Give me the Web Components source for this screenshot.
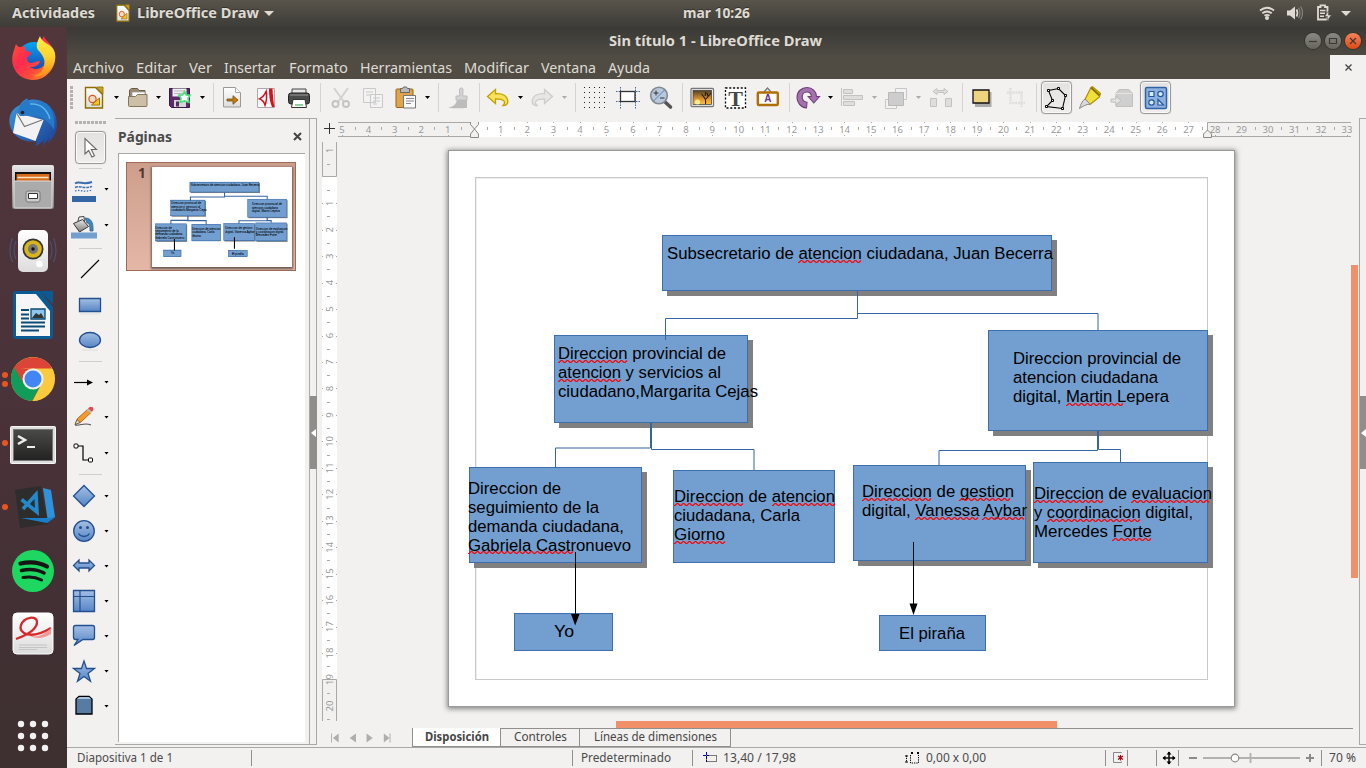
<!DOCTYPE html>
<html lang="es">
<head>
<meta charset="utf-8">
<title>Sin título 1 - LibreOffice Draw</title>
<style>
html,body{margin:0;height:100%;overflow:hidden;background:#f2f1f0}
</style>
</head>
<body>
<draw-desktop></draw-desktop>
<script>
const UI = '"Noto Sans","Open Sans",sans-serif';

/* ---------- icons ---------- */
const B = 'fill="url(#b)" stroke="#234f8f" stroke-width="1.3"';
const DEFS = `<defs>
<linearGradient id="b" x1="0" y1="0" x2="0" y2="1"><stop offset="0" stop-color="#a3bfe3"/><stop offset="1" stop-color="#5686c6"/></linearGradient>
<linearGradient id="g" x1="0" y1="0" x2="0" y2="1"><stop offset="0" stop-color="#e8e8e8"/><stop offset="1" stop-color="#7b7b7b"/></linearGradient>
<linearGradient id="w" x1="0" y1="0" x2="0" y2="1"><stop offset="0" stop-color="#fff"/><stop offset="1" stop-color="#dcdcdc"/></linearGradient>
<linearGradient id="k" x1="0" y1="0" x2="0" y2="1"><stop offset="0" stop-color="#4a4a48"/><stop offset="1" stop-color="#222"/></linearGradient>
<linearGradient id="sun" x1="0" y1="0" x2="0" y2="1"><stop offset="0" stop-color="#504126"/><stop offset=".65" stop-color="#e79a2c"/><stop offset="1" stop-color="#f7c04b"/></linearGradient>
<linearGradient id="fx" x1="0" y1="0" x2="1" y2="1"><stop offset="0" stop-color="#ff5a2a"/><stop offset=".4" stop-color="#ff2a50"/><stop offset=".65" stop-color="#ff4a3a"/><stop offset="1" stop-color="#ffb01c"/></linearGradient>
<linearGradient id="fy" x1="0" y1="0" x2="0" y2="1"><stop offset="0" stop-color="#fff14a"/><stop offset=".5" stop-color="#ffd32e"/><stop offset="1" stop-color="#ff8a1a"/></linearGradient>
<linearGradient id="fb" x1="0" y1="0" x2="0" y2="1"><stop offset="0" stop-color="#00a6f5"/><stop offset="1" stop-color="#27329c"/></linearGradient>
<linearGradient id="tb" x1="0" y1="0" x2="1" y2="1"><stop offset="0" stop-color="#3c9be0"/><stop offset="1" stop-color="#1a3e92"/></linearGradient>
</defs>`;
const DRAWDOC = `<path d="M2.500 1.500h10l7 7v13.500h-17z" fill="url(#w)" stroke="#8d6c00" stroke-width="1.400"/><path d="M13.500 1h6.500v7z" fill="#c9a227" stroke="#8d6c00" stroke-width=".8"/><circle cx="9.500" cy="13" r="3.600" fill="#f8d9c0" stroke="#d9571b" stroke-width="1.200"/><path d="M8.500 19l8-7v7z" fill="#f6c523" stroke="#a07800"/>`;
const ICONS = {
 newdoc:[22,24,DRAWDOC],
 open:[23,24,`<path d="M3.500 19V4l2-1.500h6l1.500 2h6V19z" fill="#9b8b72" stroke="#6b5d48"/><path d="M6 6h13v8H6z" fill="#fff" stroke="#999" stroke-width=".7"/><path d="M2.500 10.500h7l2-2h9.500v11a1 1 0 0 1-1 1H3.500a1 1 0 0 1-1-1z" fill="#cdbfa6" stroke="#85765e"/>`],
 save:[24,24,`<path d="M1.500 2.500h20v19h-18l-2-2z" fill="#5b2b6c" stroke="#3a1747"/><path d="M4.500 2.500h14v8h-14z" fill="#eee"/><path d="M6 5h11M6 7.500h11" stroke="#bbb"/><path d="M6 14h12v7H6z" fill="#d5d5d5"/><path d="M8 15.500h3v5H8z" fill="#5b2b6c"/><path d="M16.500 5.500l1.800 3.400 3.700.4-2 3.200 1 3.700-4.500-1.200-4.300 1.200.8-3.800-2-3.200 3.700-.3z" fill="#fff" stroke="#4be07a" stroke-width="1.700"/>`],
 export:[21,24,`<path d="M1.500 1.500h12l5 5v14.500h-17z" fill="url(#w)" stroke="#999"/><path d="M13.500 1.500v5h5" fill="#fff" stroke="#aaa"/><path d="M5 13h6v-3.300l5 4.300-5 4.300V15H5z" fill="#c17d11" stroke="#7a4c05" stroke-width=".8"/>`],
 pdf:[21,24,`<path d="M1.500 2.500h17v19h-17z" fill="#fafafa" stroke="#aaa"/><path d="M13 2.500h3.500c.3 7 .8 13 2 18.500h-2.500c-2.500-6-3-12-3-18.500z" fill="#d3121c"/><path d="M1.500 13C6 11.500 9 7 10.500 2.500 12 9 11.500 16 9 21.500 8 17 6 14 1.500 13z" fill="#d3121c"/><path d="M5 12.700c2-1 3.700-3 4.500-5 .5 3.500.4 6.500-.6 9-.9-2-2-3.300-3.900-4z" fill="#fff"/>`],
 print:[24,24,`<path d="M5 3h14v7H5z" fill="#e6e6e6" stroke="#444"/><rect x="1.500" y="7" width="21" height="11" rx="2.500" fill="#4a4c4b" stroke="#222"/><path d="M3 9h18" stroke="#999"/><path d="M6 13.500h12l1.500 8h-15z" fill="#fff" stroke="#333"/><path d="M8 18h8v2H8z" fill="#8fd19e"/>`],
 cut:[22,24,`<g stroke="#c4c4c4" fill="none" stroke-width="2"><path d="M4 2l10 14M18 2L8 16" stroke="#d2d2d2"/><circle cx="5.500" cy="18" r="3"/><circle cx="16" cy="18" r="3"/></g>`],
 copy:[22,24,`<g fill="#f3f3f3" stroke="#c9c9c9"><path d="M1.500 2.500h12v14h-12zM8.500 8.500h12v13h-12z"/><path d="M4 6h7M4 9h4M11 12h7M11 15h7M11 18h4"/></g>`],
 paste:[24,24,`<rect x="2" y="3" width="17" height="18.500" rx="1" fill="#e0a44a" stroke="#9c6310"/><path d="M6.500 2.500h2l1-1.500h3l1 1.500h2v4h-9z" fill="#b9b9b9" stroke="#666"/><path d="M9.500 9.500h12v12.500h-12z" fill="#fafafa" stroke="#777"/><path d="M12 12.500h8M12 15h8M12 17.500h5" stroke="#888"/>`],
 brush:[22,24,`<path d="M12.500 3q2-2.500 3.500 0l-.3 7h4.300v4H9v-4h3.700z" fill="#d4d4d4" stroke="#bcbcbc"/><path d="M10 14h10v8c-5 0-11 1-19-.5 5-.5 8-3 9-7.500z" fill="#bcbcbc"/>`],
 undo:[24,22,`<path d="M9.500 2.500v4.300c7-.6 12 2 12.300 7.700.1 2.400-1.700 4-4.800 4 1.500-1.500 2-3.300.8-4.600-1.500-1.500-4.500-2-8.300-2v4.600L1.500 9.500z" fill="#f7e25a" stroke="#c4a000" stroke-width="1.300"/>`],
 redo:[24,22,`<path d="M14.500 2.500v4.300c-7-.6-12 2-12.300 7.700-.1 2.400 1.700 4 4.800 4-1.500-1.500-2-3.300-.8-4.600 1.500-1.500 4.500-2 8.300-2v4.600l8-7z" fill="#e6e6e6" stroke="#cdcdcd" stroke-width="1.300"/>`],
 griddots:[24,24,Array.from({length:25},(_,i)=>`<path d="M${1+(i%5)*5} ${1+Math.floor(i/5)*5}h1v1h-1z" fill="#222"/>`).join('')],
 help:[25,24,`<path d="M4.500 1v22M19.500 1v22M0 5.500h24M0 15.500h24" stroke="#3d6ea5" stroke-dasharray="1.500 1"/><rect x="4.500" y="5.500" width="14.500" height="10" fill="#fff" stroke="#333" stroke-width="1.300"/>`],
 zoom:[24,24,`<path d="M15 15l6.500 6" stroke="#555" stroke-width="3.600" stroke-linecap="round"/><circle cx="10" cy="9.500" r="8.300" fill="#b9c9dc" stroke="#808890" stroke-width="1.600"/><path d="M4.500 15L15.500 4" stroke="#5b7faa"/><path d="M7 4.500v5M4.500 7h5M11 12h4.500" stroke="#333"/>`],
 image:[25,22,`<rect x="1" y="1.500" width="22.500" height="18" rx="1" fill="#fff" stroke="#777" stroke-width="1.300"/><rect x="3" y="3.500" width="18.500" height="14" fill="url(#sun)" stroke="#333" stroke-width=".7"/><circle cx="7.500" cy="15" r="2.500" fill="#ffed9c"/><path d="M15.500 17c.5-5 0-5-4-10M16 12l5-6M15 9l1-4M18 9l-1-3" stroke="#2a1a05" stroke-width="1.100" fill="none"/>`],
 textbox:[23,24,`<rect x="1.500" y="2" width="20" height="20" fill="#fff" stroke="#000" stroke-dasharray="2 1.800" stroke-width="1.300"/><text x="11.500" y="19.500" text-anchor="middle" font-family="Liberation Serif" font-weight="bold" font-size="22" fill="#44484a">T</text>`],
 fontwork:[24,24,`<path d="M8 6l3.500-4L15 6" fill="none" stroke="#777" stroke-width="1.300"/><rect x="1.800" y="6.500" width="20" height="12.500" rx="1" fill="#fdfbf5" stroke="#b06f05" stroke-width="2.400"/><text x="11.800" y="16.300" text-anchor="middle" font-family="Liberation Sans" font-weight="bold" font-size="10" fill="#6a3486">A</text>`],
 rotate:[24,24,`<path d="M10.500 22C4.500 21.500 1 16.500 1 11.500 1 5.500 5.500 1.500 11 1.500c5.500 0 9.300 4 9.500 9h3l-5.700 6.500-5.600-6.500h3.200c-.2-2.800-2-4.500-4.400-4.500-2.800 0-4.800 2.200-4.800 5 0 2.600 1.800 4.800 4.800 5.200z" fill="#a472ac" stroke="#6f3f78" stroke-width="1.100"/>`],
 align:[24,22,`<g fill="#dedede" stroke="#c2c2c2"><path d="M1.500 1v18"/><path d="M3.500 2.500h9v4h-9zM3.500 8.500h19v4h-19zM3.500 14.500h11v4h-11z"/></g>`],
 arrange:[24,24,`<g stroke="#c6c6c6"><path d="M11.500 2.500h11v11h-11zM1.500 13.500h11v9h-11z" fill="#f2f2f2"/><path d="M4.500 6.500h15v13h-15z" fill="#cdcdcd" stroke="#b8b8b8"/></g>`],
 distribute:[24,24,`<g fill="#dedede" stroke="#c2c2c2"><path d="M4 5.500l4-3v2h7v-2l4 3-4 3v-2H8v2z"/><path d="M1.500 12.500h6v8h-6zM16.500 12.500h6v8h-6z"/></g>`],
 shadow:[22,22,`<path d="M4 5h16.500v15H4z" fill="#999" opacity=".8"/><path d="M2 3h16v13H2z" fill="#edd37e" stroke="#111" stroke-width="1.300"/>`],
 crop:[22,24,`<path d="M5.500 2v15H20M2 6.500h14.500V21" fill="none" stroke="#dedede" stroke-width="2.500" stroke-dasharray="2 .8"/>`],
 points:[24,24,`<path d="M3.500 4.500l10-2 7 7-3 13-16-2 6-6z" fill="none" stroke="#000" stroke-width="1.100"/><g fill="#fff" stroke="#000"><path d="M2.500 3.500h2v2h-2zM12.500 1.500h2v2h-2zM19.500 8.500h2v2h-2zM16.500 21.500h2v2h-2zM.500 19.500h2v2h-2zM6.500 13.500h2v2h-2z"/></g>`],
 glue:[24,24,`<path d="M13 1.500l1.500-.8 8 6.800-1 3.500L12 18.500l-5-5z" fill="#f0e03a" stroke="#b08800" stroke-width="1.100"/><path d="M13 1.500l8.500 8" stroke="#8a6d00" stroke-width="2"/><path d="M7 13l5 5c-4 .5-7 2-10.500 4.500C3 18 4 15 7 13z" fill="#d9d9d9" stroke="#888"/>`],
 extr:[24,22,`<path d="M6 6.500l3-4h10l3.500 4v13H6z" fill="#cfcfcf" stroke="#c0c0c0"/><path d="M6 6.500h16" stroke="#e5e5e5"/><path d="M1 12h5v-3l5 4.500-5 4.500v-3H1z" fill="#e4e4e4" stroke="#bcbcbc"/>`],
 shapes:[24,24,`<rect x="1.500" y="1.500" width="21" height="21" rx="1.500" fill="#8eb0dc" stroke="#2e63a8" stroke-width="1.500"/><g fill="#dbe8f7" stroke="#2257a0" stroke-width="1.200"><path d="M5 5.500h5v5H5zM14 19v-5.500l5.500 5.500z"/><circle cx="16.500" cy="8" r="2.700"/><circle cx="7.500" cy="16.500" r="2.700"/></g>`],
 cursor:[20,26,`<path d="M4 3.500v15.500l3.700-3.500 3.200 6.500 2.600-1.300-3.200-6.200h5.200z" fill="#fff" stroke="#666" stroke-width="1.100"/>`],
 linestyle:[26,24,`<g fill="none" stroke="#3b6fb0"><path d="M4 4.500c5-3 7 2 17-1.500" stroke-width="2"/><path d="M4 8.500c5-2.500 8 2 17-1" stroke-width="1.500" stroke-dasharray="3 .8"/><path d="M4 12c5-2 8 2 17-1" stroke-width="1.300" stroke-dasharray="1.500 1.500"/></g><path d="M1 17h24v6H1z" fill="#3465a4"/>`],
 fill:[26,24,`<path d="M14 3c6 0 8.500 4 8 13h-3c0-6-1-8-3-8z" fill="#3f88b8" stroke="#2e6094" stroke-width=".8"/><path d="M2.500 8.500l9-4 6 7-9 5.500z" fill="url(#g)" stroke="#333"/><path d="M7 6l1-4 5-.5.500 5.500" fill="none" stroke="#444"/><path d="M0 17.500h26v6H0z" fill="#729fcf"/>`],
 line:[22,22,`<path d="M2 20L20 2" stroke="#000" stroke-width="1.100"/>`],
 rect:[24,18,`<path d="M1.500 1.500h21v13h-21z" ${B}/><path d="M2 17h20" stroke="#ddd"/>`],
 ellipse:[24,20,`<ellipse cx="12" cy="9" rx="10.500" ry="7.500" ${B}/><path d="M4 19h16" stroke="#ddd"/>`],
 arrow:[24,12,`<path d="M2 6.500h14" stroke="#000" stroke-width="1.200"/><path d="M15 3.500l6 3-6 3z"/>`],
 pencil:[24,22,`<path d="M3 19c6 1 9-3 16 0" fill="none" stroke="#555" stroke-width="1.100"/><path d="M3 18.500l2.500-6L15.500 3.500l3.500 3L9 16z" fill="#f39a2d" stroke="#a85a08" stroke-width=".8"/><path d="M3 18.500l2-4.800 3.200 2.800z" fill="#f6dcb4" stroke="#333" stroke-width=".6"/><path d="M14.500 4l1.500-1.500 4 3.200-1.500 1.500z" fill="#bbb"/><path d="M16 2.500l2-1.700 3 .5.500 2.700-1.700 1.700z" fill="#e8484c"/>`],
 connector:[24,22,`<path d="M5 4h6v14h7" fill="none" stroke="#000" stroke-width="1.200"/><rect x="2" y="2" width="4" height="4" rx="1" fill="#fff" stroke="#000"/><rect x="16.500" y="16" width="4" height="4" rx="1" fill="#fff" stroke="#000"/>`],
 diamond:[24,24,`<path d="M12 1.500L22.500 12 12 22.500 1.500 12z" ${B}/>`],
 smiley:[24,24,`<circle cx="12" cy="12" r="10.300" ${B}/><circle cx="8.500" cy="8.500" r="1.500" fill="#234f8f"/><circle cx="15.500" cy="8.500" r="1.500" fill="#234f8f"/><path d="M6.500 14.500c2.500 4 8.500 4 11 0" fill="none" stroke="#234f8f" stroke-width="1.300"/>`],
 dblarrow:[24,18,`<path d="M1.500 8.500l5.500-5.500v3h10V3l5.500 5.500-5.500 5.500v-3H7v3z" ${B}/>`],
 flow:[24,24,`<path d="M1.500 1.500h21v21h-21z" ${B}/><path d="M1.500 7.500h21M8 1.500v21" stroke="#234f8f" stroke-width="1.200"/>`],
 callout:[24,24,`<path d="M3.500 1.500h17q2 0 2 2v10q0 2-2 2H11l-9 6 4-6H3.500q-2 0-2-2v-10q0-2 2-2z" ${B}/>`],
 star:[24,24,`<path d="M12 2l2.500 7.500h8l-6.500 5 2.500 7.800-6.500-4.800-6.500 4.800L8 14.500l-6.500-5h8z" ${B}/>`],
 cube:[24,22,`<path d="M4 4l3-2.700h10l3 2.700v15H4z" fill="#587ba3" stroke="#000" stroke-width="1.300"/><path d="M5 4h14l-2-2h-9.500z" fill="#a7c3e0"/>`],
 /* dock */
 firefox:[48,48,`<circle cx="25" cy="24" r="17" fill="url(#fb)"/><path d="M5 15c1-2 1-4 2-6 1 2 2 3 4 3 1 0 3-1 5 0 0 3 0 4 5 5 2 1 1 3-3 5 0 4 1 6 5 6 3-1 5-2 8-2-1 4-5 6-10 6 7 5 16 0 17-8 1-7-3-9-6-12-1-5 1-8 3-11 1 5 8 7 11 17 2 15-9 27-22 27C9 45-1 31 5 15z" fill="url(#fx)"/><path d="M31 1c-2 5-5 9-2 14 4 4 8 9 6 16-2 6-6 9-12 10 13 3 25-8 23-22C45 9 33 9 31 1z" fill="url(#fy)"/>`],
 thunderbird:[50,50,`<path d="M18 3c9-4 22 0 28 11 5 10 4 23-6 31l1-5-6 8 1-6c-3 3-6 5-9 6l2-5c-9 2-19-1-24-9C-1 25 0 12 12 7c1-3 4-5 8-7z" fill="url(#tb)"/><path d="M8.500 15l27 7-8 21L5 35z" fill="#f2f2f2"/><path d="M8.500 15l8 13.500L34 22" fill="none" stroke="#777" stroke-width="1.200"/><path d="M10 15c1-7 5-12 10-14-1 5 8 5 18 4 8 8 9 16 8 27-3-6-6-8-10-11C29 15 20 18 12 18z" fill="#2579c9"/><path d="M22 6c10-1 17 5 20 15" fill="none" stroke="#5cb5ee" stroke-width="1.500"/><circle cx="14.500" cy="14.500" r="1.800" fill="#222"/>`],
 files:[48,46,`<rect x="3" y="1" width="42" height="44" rx="2" fill="url(#g)"/><path d="M6 8h36v9H6z" fill="#111"/><path d="M7.500 10h33v7H7.500z" fill="#d86b18"/><path d="M8.500 13.500h31" stroke="#f6e6c4" stroke-width="1.500"/><rect x="5" y="17" width="38" height="27" rx="1" fill="#ababab" stroke="#ddd"/><rect x="17" y="27" width="14" height="11" rx="2" fill="#ccc" stroke="#777"/><path d="M19.500 29.500h9v5h-9z" fill="#fff" stroke="#333"/>`],
 rhythm:[50,46,`<g fill="none" stroke="#496591" opacity=".6" stroke-width="1.100"><path d="M8 13q-4 9 0 18M4.500 10q-5 12 0 24M42 13q4 9 0 18M45.500 10q5 12 0 24"/></g><rect x="10" y="2" width="30" height="42" rx="5" fill="url(#w)"/><circle cx="25" cy="21" r="10.500" fill="#333"/><circle cx="25" cy="21" r="8.800" fill="#d9b51c"/><circle cx="25" cy="21" r="5" fill="#777"/><circle cx="25" cy="21" r="1.700" fill="#111"/><circle cx="31.500" cy="36" r="3.300" fill="#fff"/>`],
 writer:[42,50,`<path d="M4 1h24l13 16v29a3 3 0 0 1-3 3H4a3 3 0 0 1-3-3V4a3 3 0 0 1 3-3z" fill="#0a5a94"/><path d="M28 1h13v13z" fill="#0a5a94"/><path d="M4 4h20l14 17v25H4z" fill="#f6f6f6"/><path d="M9 20h8M9 24.500h8M9 28.500h8M9 32.500h24M9 36.500h24M9 40.500h18" stroke="#0b4a75" stroke-width="2"/><path d="M19 19h14v10H19z" fill="#8ec5ea" stroke="#0b4a75" stroke-width="1.300"/><path d="M20 28l4-5 3 2 2-2 3 5z" fill="#333"/>`],
 chrome:[48,48,`<circle cx="24" cy="24" r="22" fill="#fcca3f"/><path d="M5 13C13-1 35-2 43 13.500H24z" fill="#db4437"/><path d="M5 12.500C-3 27 6 45 24 46l9-17-9-15z" fill="#db4437"/><path d="M5 12.500C-3 27 6 45 23 46l9.500-17H15z" fill="#0f9d58"/><path d="M24 14h19.500C50 28 40 46 23.500 46L33 28z" fill="#fcca3f"/><circle cx="24" cy="24" r="10.500" fill="#f1f1f1"/><circle cx="24" cy="24" r="8.500" fill="#4285f4"/>`],
 terminal:[48,40,`<rect x="1.500" y="1.500" width="45" height="37" rx="1" fill="#ddd" stroke="#f5f5f5"/><rect x="4.500" y="4.500" width="39" height="31" fill="url(#k)" stroke="#777"/><path d="M9 11l7 4-7 4" fill="none" stroke="#eee" stroke-width="2.500"/><path d="M18 22h8" stroke="#eee" stroke-width="2"/>`],
 vscode:[48,46,`<path d="M6 6l26-4 7 38-28 4z" fill="#2d2d2d"/><path d="M34 4l8 2 4 27-7 5z" fill="#2f93dc"/><path d="M12 34l27 0 7-1-8 6z" fill="#1a7fcb"/><path d="M12.500 15.500L28 28l-1-17.500L14 25" fill="none" stroke="#2489ca" stroke-width="3.600"/>`],
 spotify:[46,46,`<circle cx="23" cy="23" r="21" fill="#1ed760"/><g fill="none" stroke="#151515" stroke-linecap="round"><path d="M10.500 15.500q15-3.500 26.500 3" stroke-width="4.200"/><path d="M11.500 22.500q12.500-3 22.500 2.500" stroke-width="3.600"/><path d="M13 29.500q10-2 18.500 2.500" stroke-width="3"/></g>`],
 reader:[44,46,`<rect x="2" y="2" width="40" height="41" rx="4" fill="url(#w)" stroke="#fff"/><path d="M5 28C16 24 26 18 26 11 26 4 13 6 10 14c-3 9 10 15 30 3" fill="none" stroke="#d7282c" stroke-width="2.300"/><path d="M17 24c8 3 15 1 23-7v6c-8 5-16 5-23 1z" fill="#ee9a96"/><path d="M8 34h28M8 36.500h28M8 38.500h18" stroke="#c4c4c4"/>`],
 apps:[34,34,[5,17,29].map(y=>[5,17,29].map(x=>`<circle cx="${x}" cy="${y}" r="3.200" fill="#f2f2f2"/>`).join('')).join('')],
 /* panel indicators */
 drawsmall:[16,18,`<g transform="scale(.72 .78)">${DRAWDOC}</g>`],
 wifi:[16,16,`<g fill="none" stroke="#dfdbd2" stroke-width="1.800"><path d="M1 5.500q7-5.500 14 0M3.300 8.300q4.700-3.600 9.400 0M5.500 10.800q2.500-1.800 5 0"/></g><circle cx="8" cy="13" r="2" fill="#dfdbd2"/>`],
 vol:[18,16,`<path d="M1 5.500h3l5-4v13l-5-4H1z" fill="#dfdbd2"/><path d="M10.500 4.500q2 3.500 0 7" fill="none" stroke="#dfdbd2" stroke-width="1.600"/><path d="M12.500 2.800q3 5.200 0 10.400M14.700 1.500q3.600 6.500 0 13" fill="none" stroke="#87847d" stroke-width="1.200"/>`],
 bat:[16,18,`<path d="M2 3h2.500V1.300h4.500V3h2.500v12.500H2z" fill="none" stroke="#dfdbd2" stroke-width="1.800"/><path d="M4 6.500h5.500M4 9.300h5M4 12.200h4" stroke="#dfdbd2" stroke-width="1.500"/><path d="M12.500 7l-4 5.500h3l-.5 4.500 4.500-6h-3z" fill="#dfdbd2" stroke="#45433e" stroke-width=".6"/>`],
 posico:[16,14,`<path d="M4.500 1v10M1 4.500h6" stroke="#00c" stroke-dasharray="3 1"/><path d="M4.500 4.500h10v6h-10z" fill="none" stroke="#000" stroke-dasharray="1 1"/>`],
 sizeico:[16,14,`<path d="M1.500 4.500v7M5.500 4v8h8V4" fill="none" stroke="#000" stroke-dasharray="1.300 1"/><path d="M0 5h3M0 11h3M6 1l2 2M8 1L6 3M12 1l2 2M14 1l-2 2" stroke="#000"/>`],
 docico:[13,14,`<path d="M9.500 2V1.500h-8v10h8v-1" fill="none" stroke="#888"/><path d="M8.500 4v5.500M6 5l5 3.500M11 5L6 8.500" stroke="#b00010" stroke-width="1.200"/>`],
 move:[14,14,`<path d="M7 1v12M1 7h12" stroke="#111" stroke-width="1.600"/><path d="M4.500 3.500L7 .500l2.500 3zM4.500 10.500L7 13.500l2.500-3zM3.500 4.500L.500 7l3 2.500zM10.500 4.500l3 2.500-3 2.500z"/>`],
};

function define(name, css, html, extra = {}) {
  customElements.define(name, class extends HTMLElement {
    constructor() { super(); this.attachShadow({mode:'open'}); }
    connectedCallback() {
      this.shadowRoot.innerHTML = `<style>:host{box-sizing:border-box}*{box-sizing:border-box}${css}</style>` +
        (typeof html === 'function' ? html(this) : html);
      if (extra.ready) extra.ready(this);
    }
  });
}

/* Places children left to right (or top to bottom) at the given offsets by margins. */
const run = (start, items, vertical) => {
  let end = start;
  return items.map(([pos, size, markup]) => {
    const gap = pos - end; end = pos + size;
    return vertical
      ? `<div style="flex:none;margin-top:${gap}px;height:${size}px;display:flex;align-items:center">${markup}</div>`
      : `<div style="flex:none;margin-left:${gap}px;width:${size}px;display:flex;align-items:center">${markup}</div>`;
  }).join('');
};
const ic = n => `<ui-icon name="${n}"></ui-icon>`;
const icAt = (cx, n) => [Math.round(cx - ICONS[n][0] / 2), ICONS[n][0], ic(n)];

define('ui-icon', ':host{display:block;flex:none}svg{display:block;overflow:visible}', el => {
  const [w, h, body] = ICONS[el.getAttribute('name')];
  return `<svg width="${w}" height="${h}" viewBox="0 0 ${w} ${h}">${DEFS}${body}</svg>`;
});
/* One line of text condensed or expanded to an exact advance width. */
define('fit-text', ':host{display:block;flex:none;white-space:nowrap}span{display:inline-block;transform-origin:0 50%}', '<span><slot></slot></span>', {
  ready(el) {
    const w = +el.getAttribute('w'), s = el.shadowRoot.querySelector('span');
    el.style.width = w + 'px';
    const n = s.offsetWidth ? parseFloat(getComputedStyle(s).width) : 0;
    if (n) s.style.transform = `scaleX(${w / n})`;
  }
});
const fit = (w, t) => `<fit-text w="${w}">${t}</fit-text>`;
define('drop-caret', ':host{display:block;width:5px;height:3px;background:#000;clip-path:polygon(0 0,100% 0,50% 100%)}:host([off]){background:#aaa}', '');
define('bar-sep', ':host{display:block;width:1px;height:29px;background:#d5d3d0}', '');
define('tool-button', ':host{display:flex;align-items:center;justify-content:center;width:31px;height:33px;border:1px solid #9b9a98;border-radius:4px;background:linear-gradient(#e3e2e1,#efeeed);box-shadow:inset 0 0 0 1px #fafafa,0 0 1px #aaa}', '<slot></slot>');

define('top-panel', `:host{display:flex;height:27px;padding-bottom:1px;background:linear-gradient(#58544b,#3d3c37);color:#dfdbd2;font:bold 13.700px/26px ${UI};text-shadow:0 -1px 0 #33322e}i{display:block;border:5px solid transparent;border-top-color:#dfdbd2;border-bottom:0}`,
  () => run(0, [[12,83,fit(83,'Actividades')],[115,16,ic('drawsmall')],[137,122,fit(122,'LibreOffice Draw')],[264,10,'<i></i>'],[683,67,fit(67,'mar 10:26')],[1259,16,ic('wifi')],[1286,18,ic('vol')],[1316,16,ic('bat')],[1341,10,'<i></i>']]));

define('app-dock', `:host{display:flex;flex-direction:column;width:67px;flex:none;background:linear-gradient(180deg,#51363c 0%,#4b333a 45%,#423034 80%,#3d302f)}div{position:relative;width:66px;justify-content:center}b{position:absolute;left:2px;width:6px;height:6px;border-radius:3px;background:#e95420}`,
  () => run(27, [[35,48,ic('firefox')],[98,50,ic('thunderbird')],[164,46,ic('files')],[228,46,ic('rhythm')],[290,50,ic('writer')],[355,48,'<b style="top:17px"></b><b style="top:26px"></b>'+ic('chrome')],[425,40,'<b style="top:15px"></b>'+ic('terminal')],[484,46,'<b style="top:20px"></b>'+ic('vscode')],[548,46,ic('spotify')],[611,46,ic('reader')],[719,34,ic('apps')]], true));

define('title-bar', `:host{display:flex;height:28px;background:linear-gradient(#3a3935,#4d4a43);color:#dfdbd2;font:bold 13.700px/26px ${UI}}div{height:27px}i{width:16px;height:16px;border-radius:8px;background:linear-gradient(#8b8982,#66645d);box-shadow:0 0 0 1px #35342f;display:flex;align-items:center;justify-content:center}i.x{background:linear-gradient(#f7825c,#e2490f)}svg{display:block;fill:none;stroke:#3a3935;stroke-width:1.200}`,
  () => { const b=(d,c='')=>`<i class="${c}"><svg width="16" height="16"><path d="${d}"/></svg></i>`;
    return run(67, [[609,213,fit(213,'Sin título 1 - LibreOffice Draw')],[1305,16,b('M4 8.500h8')],[1325,16,b('M4.500 5.500h7v5h-7z')],[1345,16,b('M5 5l6 6M11 5l-6 6','x')]]); });

define('menu-bar', `:host{display:flex;height:24px;background:#504c44;color:#dfdbd2;font:13.700px/25px ${UI}}b{width:36px;height:24px;background:#f2f1f0;display:flex;align-items:center;justify-content:center}`,
  () => run(67, [[73,51,'Archivo'],[136,41,'Editar'],[189,23,'Ver'],[224,52,'Insertar'],[289,59,'Formato'],[360,92,'Herramientas'],[464,65,'Modificar'],[541,55,'Ventana'],[608,42,'Ayuda']].map(([x,w,t])=>[x,w,fit(w,t)]).concat([[1330,36,'<b><svg width="7" height="7"><path d="M.500 .500l6 6M6.500 .500l-6 6" stroke="#444" stroke-width="1.300"/></svg></b>']])));

define('tool-bar', `:host{display:flex;height:39px;padding-bottom:2px;background:#f2f1f0}.grip{width:3px;height:23px;background:repeating-linear-gradient(#b4b2af 0 3px,transparent 3px 4px)}`,
  () => { const c=(x,o='')=>[x-2.5,5,`<drop-caret ${o}></drop-caret>`], s=x=>[x,1,'<bar-sep></bar-sep>'], btn=(x,n)=>[x,31,`<tool-button>${ic(n)}</tool-button>`];
    return run(67, [[70,3,'<span class="grip"></span>'],icAt(94,'newdoc'),c(116.5),icAt(137.5,'open'),c(158.5),icAt(180,'save'),c(202.5),s(213),icAt(232.5,'export'),icAt(266.5,'pdf'),icAt(299,'print'),s(320),
    icAt(340.5,'cut'),icAt(373,'copy'),icAt(406,'paste'),c(427.5),s(438),icAt(458,'brush'),s(479),icAt(498,'undo'),c(520.5),icAt(542,'redo'),c(564.5,'off'),s(575),
    icAt(595,'griddots'),icAt(628.5,'help'),icAt(661,'zoom'),s(682),icAt(702.5,'image'),icAt(735,'textbox'),icAt(768,'fontwork'),s(789),icAt(807.5,'rotate'),c(830.5),icAt(852,'align'),c(874.5,'off'),icAt(896,'arrange'),c(918.5,'off'),icAt(941,'distribute'),s(962),
    icAt(982,'shadow'),icAt(1015.5,'crop'),s(1036),btn(1041,'points'),icAt(1089.5,'glue'),icAt(1122,'extr'),btn(1140,'shapes')]); });

define('draw-tools', `:host{display:flex;flex-direction:column;width:48px;flex:none;background:#f2f1f0}div{width:48px}.grip{margin-left:8px;width:31px;height:3px;background:repeating-linear-gradient(90deg,#b4b2af 0 3px,transparent 3px 4px)}hr{margin:0 0 0 12px;width:23px;height:1px;border:0;background:#d0cecb}drop-caret{margin-left:auto;margin-right:6px}tool-button{margin-left:8px}`,
  () => { const t=(cy,n,up=0)=>{const[w,h]=ICONS[n];return[Math.round(cy-h/2),h,`<ui-icon name="${n}" style="margin-left:${17-w/2}px"></ui-icon><drop-caret style="margin-bottom:${up}px"></drop-caret>`]}, p=(cy,n)=>{const[w,h]=ICONS[n];return[Math.round(cy-h/2),h,`<ui-icon name="${n}" style="margin-left:${23-w/2}px"></ui-icon>`]}, s=y=>[y,1,'<hr>'];
    return run(118, [[121,3,'<span class="grip"></span>'],[131,33,`<tool-button>${ic('cursor')}</tool-button>`],s(168),t(191,'linestyle',4),t(227,'fill',4),s(248),p(269,'line'),p(306,'rect'),p(341,'ellipse'),s(361),t(382,'arrow'),t(417,'pencil'),t(453,'connector'),s(474),t(496,'diamond'),t(531,'smiley'),t(566,'dblarrow'),t(601,'flow'),t(636,'callout'),t(671,'star'),t(706,'cube')], true); });

/* ---------- drawing ---------- */
const wave = (x, y, w) => {
  let d = `M${x} ${y + 1.5}`, up = true;
  for (let p = x; p + 3 <= x + w; p += 3, up = !up) d += up ? `l1 0l2 -2` : `l1 0l2 2`;
  return `<path d="${d}"/>`;
};
const NODES = [
 [662,235,390,56,1,667,244,[[386,'Subsecretario de atencion ciudadana, Juan Becerra']]],
 [554,335,194,88,1,558,344,[[168,'Direccion provincial de'],[163,'atencion y servicios al'],[200,'ciudadano,Margarita Cejas']]],
 [988,330,220,101,1,1013,349,[[168,'Direccion provincial de'],[145,'atencion ciudadana'],[156,'digital, Martin Lepera']]],
 [469,467,173,96,1,468,479,[[93,'Direccion de'],[131,'seguimiento de la'],[156,'demanda ciudadana,'],[163,'Gabriela Castronuevo']]],
 [673,470,162,93,0,674,487,[[161,'Direccion de atencion'],[126,'ciudadana, Carla'],[51,'Giorno']]],
 [853,465,173,96,1,862,482,[[152,'Direccion de gestion'],[165,'digital, Vanessa Aybar']]],
 [1033,462,175,101,1,1034,484,[[178,'Direccion de evaluacion'],[159,'y coordinacion digital,'],[118,'Mercedes Forte']]],
 [514,613,99,38,0,554,622,[[20,'Yo']]],
 [879,615,107,36,0,899,624,[[66,'El piraña']]],
];
const WAVES = [[798,261,64],[558,361,69],[558,380,63],[1066,404,58],[468,552,107],[674,504,69],[772,504,63],[674,542,51],[862,499,69],[959,499,53],[915,518,63],[982,518,43],[1034,501,69],[1131,501,80],[1047,520,94],[1112,539,39]];
define('draw-node', `:host{position:absolute;display:block;background:#729fcf;box-shadow:inset 0 0 0 1px #3d6faf;color:#000;font:16.700px/19px "Liberation Sans",Arial,sans-serif}:host([shadow]){box-shadow:inset 0 0 0 1px #3d6faf,5px 5px 0 #808080}`, '<slot></slot>');
define('draw-page', `:host{display:block;position:relative;width:785px;height:555px;background:#fff;flex:none}
 .m{position:absolute;left:26px;top:26px;width:733px;height:503px;border:1px solid #c9c9c9;box-shadow:inset 1px 1px 0 #eee}
 svg{position:absolute;left:0;top:0;width:785px;height:555px;overflow:visible;fill:none}
 :host([thumb]) .m,:host([thumb]) .wave,:host([thumb]) .head{display:none}
 :host([thumb]) draw-node{outline:3px solid #3465a4;outline-offset:-2px;-webkit-text-stroke:.2px #000}
 :host([thumb]) .wire{stroke-width:6}:host([thumb]) .ink{stroke-width:6}`,
 () => `<div class="m"></div>` + NODES.map(([x,y,w,h,s,tx,ty,ls]) =>
   `<draw-node ${s?'shadow':''} style="left:${x-449}px;top:${y-151}px;width:${w}px;height:${h}px;padding:${ty-y}px 0 0 ${Math.max(0,tx-x)}px">${ls.map(l=>`<fit-text w="${l[0]}" ${tx<x?`style="margin-left:${tx-x}px"`:''}>${l[1]}</fit-text>`).join('')}</draw-node>`).join('') +
 `<svg viewBox="449 151 785 555"><g class="wire" stroke="#3465a4"><path d="M857.500 291V318.500H665.500V340M857.500 313.500H1098V330M650.500 423V448H555.500V468M651.500 423V449.500H754V470M1097.500 431V450.500H939V465M1098.500 431V449.500H1120.500V462"/></g>
 <g class="ink" stroke="#000"><path d="M575.500 552V616M913.500 542V606"/></g><path class="head" d="M571 614h8.500l-4.300 11.500zM909.500 603.500h8l-4 11.500z" fill="#000"/>
 <g class="wave" stroke="#ff0000" stroke-width="1.200">${WAVES.map(a=>wave(...a)).join('')}</g></svg>`);

define('pages-panel', `:host{display:flex;flex-direction:column;width:194px;flex:none;margin-bottom:2px;border:solid #aaa8a5;border-width:1px 0 1px;background:#f2f1f0;padding:0 0 2px 3px}
 header{height:34px;display:flex;align-items:center;justify-content:space-between;padding:2px 7px 0 0;color:#4b4b4b;font:bold 13.700px/32px ${UI}}header svg{margin-bottom:2px}
 .list{flex:1;width:187px;background:#fff;border:solid #aaa8a5;border-width:1px 0 0 1px;padding:8px 0 0 7px}
 .item{width:170px;height:109px;display:flex;background:linear-gradient(#cd9e8c,#e4b7a6);border:1px solid #9f6a58;color:#4a3a35;font:bold 13.500px/20px ${UI}}
 .no{width:25px;padding-left:11px;flex:none}.pg{width:140px;height:100px;margin-top:4px;background:#fff;box-shadow:0 1px 2px 1px #6b5a55;overflow:hidden;flex:none}
 .pg draw-page{transform:scale(.1775,.1796);transform-origin:0 0}`,
 () => `<header>${fit(54,'Páginas')}<svg width="9" height="9"><path d="M1 1l7 7M8 1l-7 7" stroke="#444" stroke-width="2"/></svg></header><div class="list"><div class="item"><span class="no">1</span><div class="pg"><draw-page thumb></draw-page></div></div></div>`);

define('split-grip', `:host{display:flex;align-items:center;justify-content:center;width:8px;flex:none;margin-bottom:2px;border:1px solid #aaa8a5}:host([right]){border-right:0;width:7px}span{display:flex;align-items:center;justify-content:center;flex:none;width:7px;height:73px;margin-top:2px;background:#8f8e8a}i{border:4px solid transparent;border-right:5px solid #fff;border-left:0}`, '<span><i></i></span>');

const P = 26.46;
define('h-ruler', ':host{display:block;height:16px}svg{display:block}', () => {
  let g = '';
  for (let i = -5; i <= 33; i++) { const x = 474 + P*i; 
    if (i) g += `<text x="${Math.min(x+.2,1347)}" y="10.500" text-anchor="middle">${Math.abs(i)}</text><path d="M${Math.round(x)+.5} 0v1M${Math.round(x)+.5} 13v1" />`;
    const hx = Math.round(x + P/2) + .5; if (hx < 1348) g += `<path d="M${hx} 5v3"/>`; }
  return `<svg width="1014" height="16" viewBox="338 0 1014 16" font-family='"Noto Sans",sans-serif' font-size="9.500" fill="#999" stroke-width="1"><path d="M475 0h732v15H475z" fill="#fff"/><g fill="none" stroke="#aaa8a5"><path d="M338 .500H475M338 14.500H475M1351 .500H1207.500V14.500H1351"/></g><g stroke="#aaa">${g.replace(/<text/g,'<text stroke="none"')}</g><g fill="#f2f1f0" stroke="#8a8986"><path d="M470.500 -.500h8v3l-4 4.500 4 5v3.500h-8v-3.500l4-5-4-4.500zM1203.500 15.500v-3.500l4-4 4 4v3.500z"/></g></svg>`;
});
define('v-ruler', ':host{display:block;width:16px;flex:none}svg{display:block}', () => {
  let g = '';
  for (let i = -1; i <= 20; i++) { const y = 176.8 + P*i;
    if (i) g += `<text transform="translate(333 ${y}) rotate(-90)" text-anchor="middle">${Math.abs(i)}</text><path stroke="#aaa" d="M322 ${Math.round(y)+.5}h1M336 ${Math.round(y)+.5}h1"/>`;
    g += `<path stroke="#aaa" d="M327 ${Math.round(y+P/2)+.5}h3"/>`; }
  return `<svg width="16" height="579" viewBox="322 142 16 579" font-family='"Noto Sans",sans-serif' font-size="9.500" fill="#999"><path d="M322 177h15v503h-15z" fill="#fff"/><path d="M322.500 142v34.500h14V142M322.500 721V679.500h14V721" fill="none" stroke="#aaa8a5"/>${g}</svg>`;
});

define('sheet-tabs', `:host{display:flex;flex:none;height:19px;background:#f2f1f0;color:#454545;font:12.300px/16px ${UI}}.t{height:19px;display:flex;justify-content:center;border:solid #918f8b;border-width:1px 1px 1px 0;width:100%}.t.on{background:#fff;border-top:0;padding-top:1px;border-left-width:1px;font-weight:bold}.rest{width:100%;height:19px;border-top:1px solid #918f8b}svg{display:block;fill:#b0aeab}`,
 () => run(317, [[331,60,'<svg width="60" height="10"><path d="M0 0h1v9H0zM8 0v9L2 4.500zM26 0v9L19.500 4.500zM37 0v9l6.500-4.500zM55 0v9l6-4.500zM61 0h1v9h-1z" transform="translate(0 .500) scale(.96 1)"/></svg>'],[412,89,`<span class="t on">${fit(64,'Disposición')}</span>`],[501,79,`<span class="t">${fit(53,'Controles')}</span>`],[580,151,`<span class="t">${fit(123,'Líneas de dimensiones')}</span>`],[731,622,'<span class="rest"></span>']]));

define('page-view', `:host{display:flex;flex-direction:column;width:1042px;flex:none;background:#f2f1f0}
 .top{height:24px;display:flex;padding-top:4px;flex:none}.corner{width:21px;display:flex;padding:1px 0 0 7px}
 .mid{height:579px;display:flex;flex:none}.v{width:21px;padding-left:5px;flex:none}.area{width:1013px;height:579px;padding:9px 0 0 111px}
 draw-page{box-shadow:0 0 0 1px #999,0 1px 5px 2px #888}
 .vs{width:7px;margin-left:0;margin-top:123px;height:313px;background:#f08f68;flex:none}
 .hs{height:7px;flex:none;width:441px;margin-left:299px;background:#f08f68}`,
 () => `<div class="top"><span class="corner"><svg width="11" height="11"><path d="M5.500 0v11M0 5.500h11" stroke="#333"/></svg></span><h-ruler></h-ruler></div><div class="mid"><span class="v"><v-ruler></v-ruler></span><div class="area"><draw-page></draw-page></div><div class="vs"></div></div><div class="hs"></div><sheet-tabs></sheet-tabs>`);

define('status-bar', `:host{display:flex;height:21px;border-top:1px solid #aaa8a5;background:#f2f1f0;color:#4a4a4a;font:12.300px/20px ${UI}}u{display:block;width:1px;height:16px;background:#918f8b}svg{display:block}`,
 () => { const s=x=>[x,1,'<u></u>'];
  return run(67, [[77,96,fit(96,'Diapositiva 1 de 1')],s(251),s(572),[581,90,fit(90,'Predeterminado')],s(692),[702,16,ic('posico')],[723,73,fit(73,'13,40 / 17,98')],[905,16,ic('sizeico')],[926,60,fit(60,'0,00 x 0,00')],s(1105),[1112,13,ic('docico')],s(1127),s(1156),[1162,14,ic('move')],s(1178),
  [1188,128,'<svg width="128" height="14"><path d="M1 7h8M118 7h8M122 3v8" stroke="#8c8a87" stroke-width="2"/><path d="M15 7h97M62.500 2v10" stroke="#b3b1ae" stroke-width="1.800"/><circle cx="47" cy="7" r="3.800" fill="#fff" stroke="#8c8a87" stroke-width="1.200"/></svg>'],s(1321),[1329,27,fit(27,'70 %')]]); });

define('draw-desktop', ':host{display:flex;flex-direction:column;width:1366px;height:768px;overflow:hidden}.row{display:flex;height:741px}.win{width:1299px;display:flex;flex-direction:column}.body{height:629px;display:flex}',
 `<top-panel></top-panel><div class="row"><app-dock></app-dock><div class="win"><title-bar></title-bar><menu-bar></menu-bar><tool-bar></tool-bar><div class="body"><draw-tools></draw-tools><pages-panel></pages-panel><split-grip></split-grip><page-view></page-view><split-grip right></split-grip></div><status-bar></status-bar></div></div>`);
</script>
</body>
</html>
